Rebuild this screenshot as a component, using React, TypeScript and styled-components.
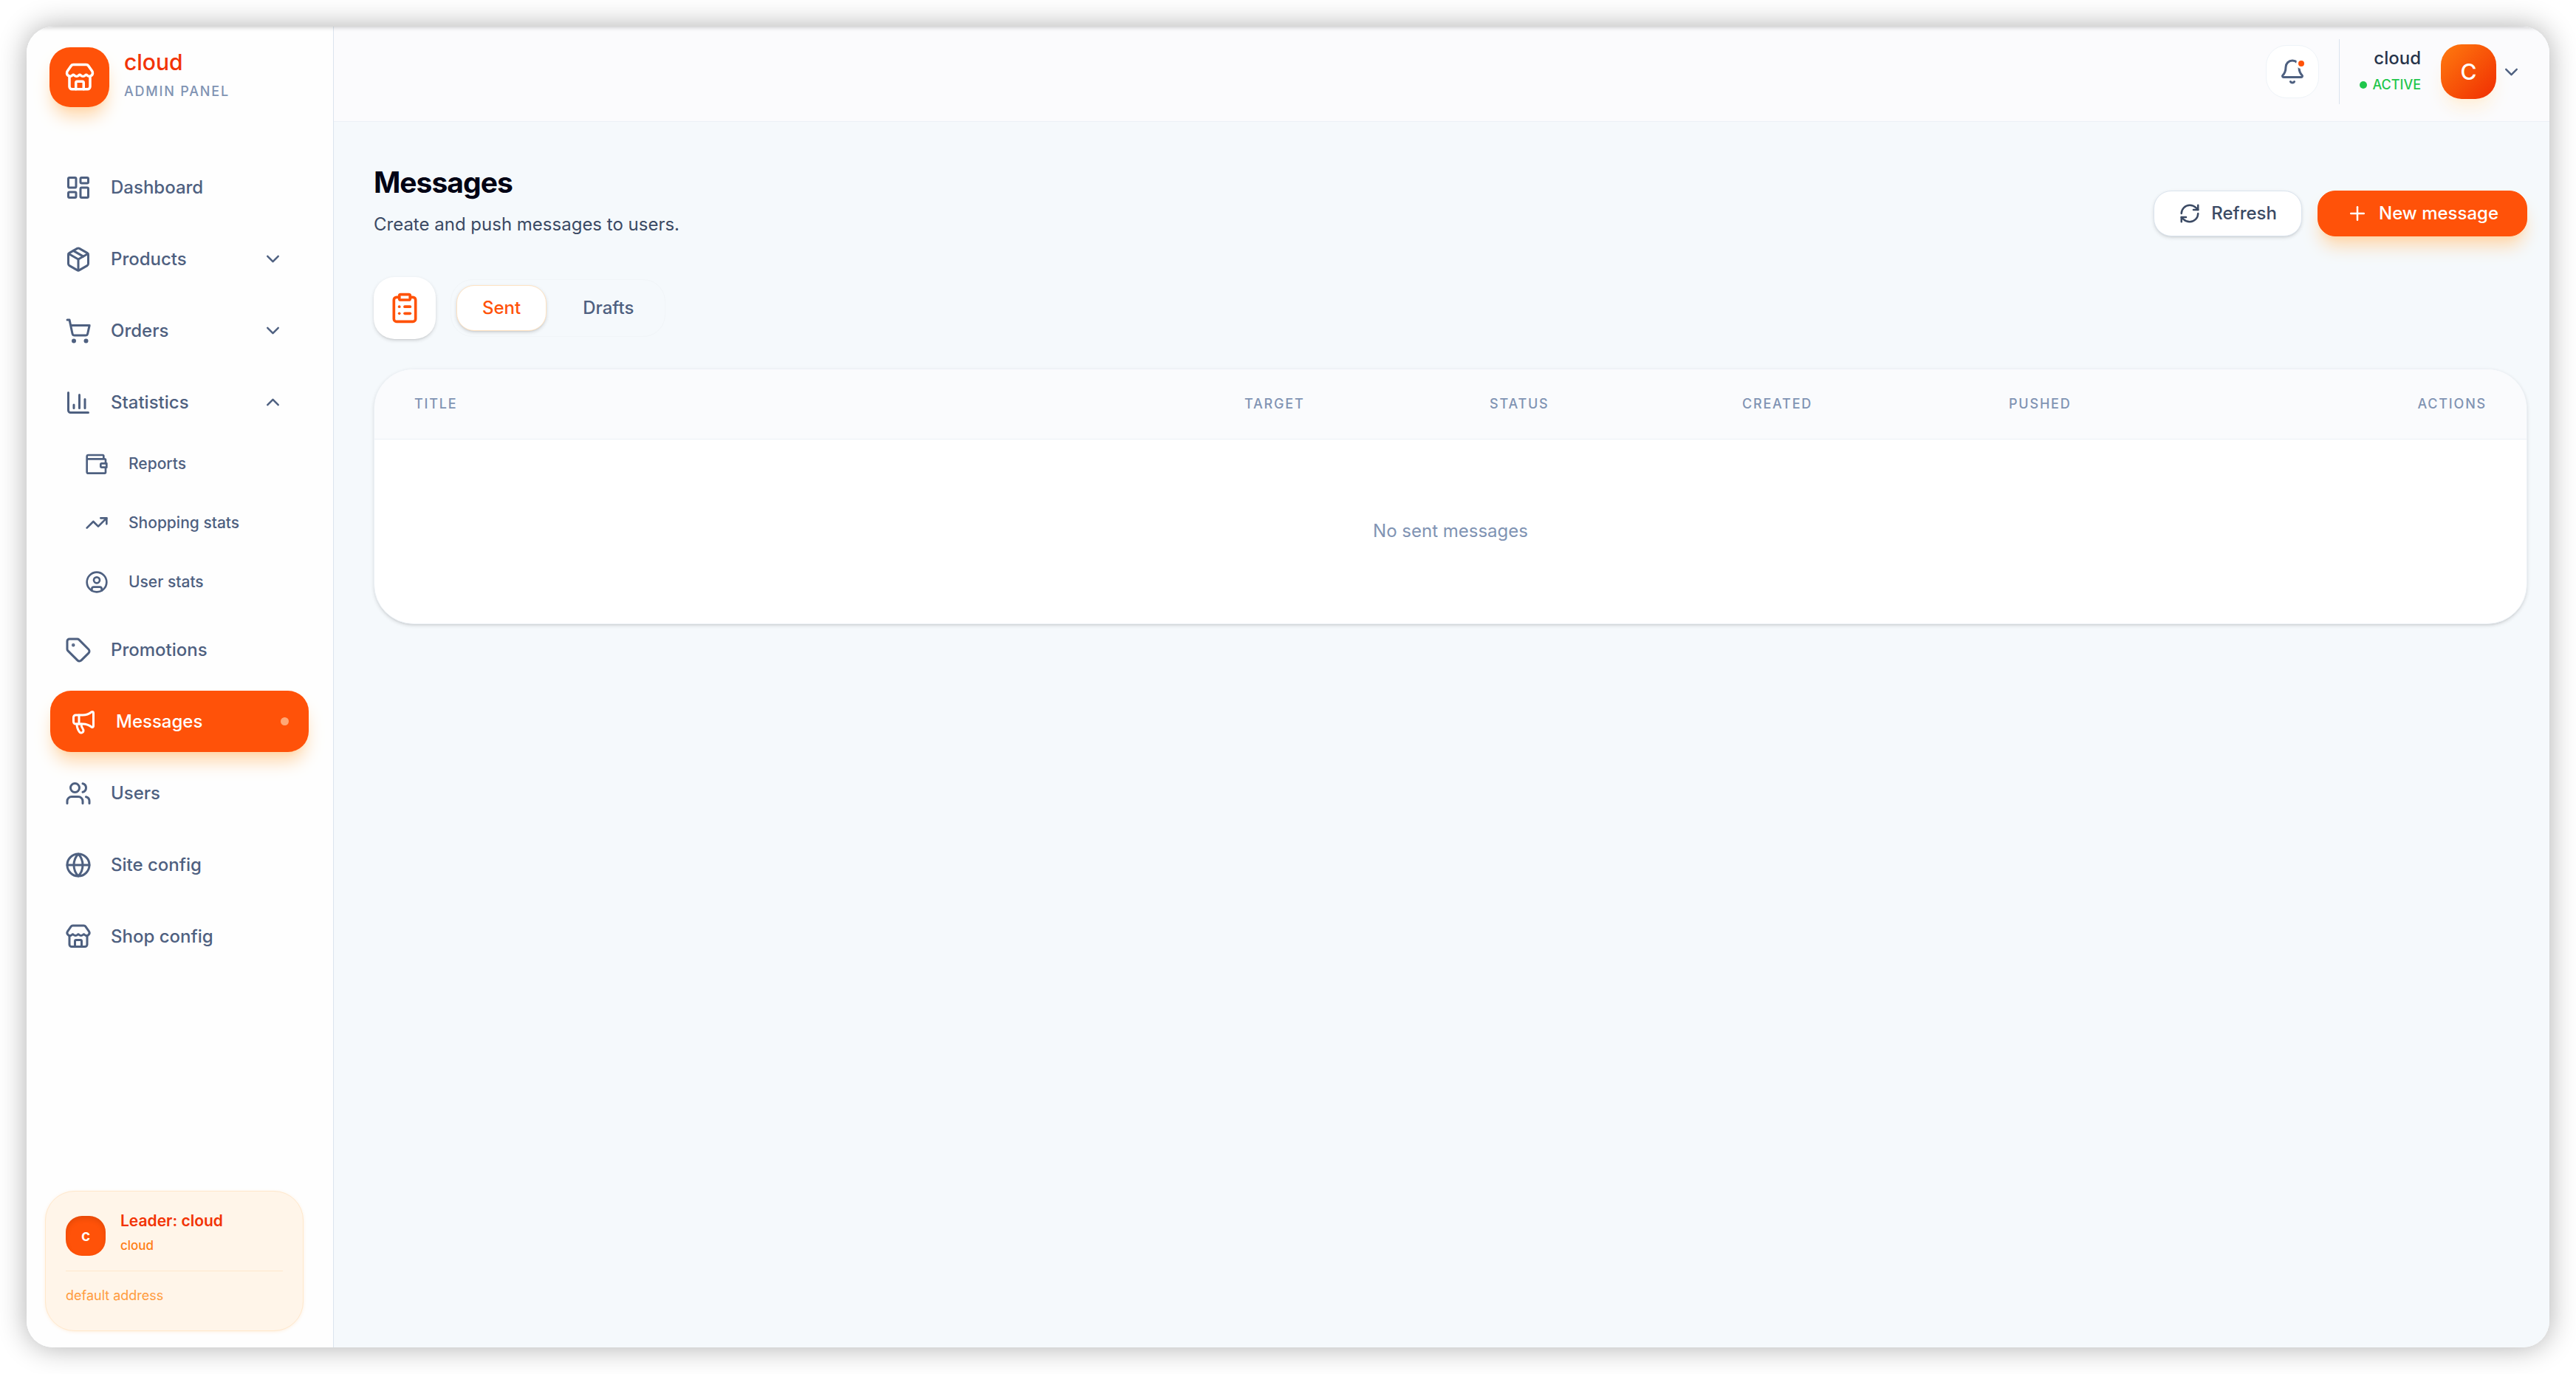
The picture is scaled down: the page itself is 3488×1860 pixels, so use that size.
import React from 'react';
import styled, { createGlobalStyle, css } from 'styled-components';
import {
  Bell,
  ChevronDown,
  ChevronUp,
  CircleUser,
  ClipboardList,
  Globe,
  LayoutDashboard,
  Megaphone,
  Package,
  Plus,
  RefreshCw,
  ShoppingCart,
  Store,
  Tag,
  TrendingUp,
  Users,
} from 'lucide-react';

const color = {
  accent: '#ff5209',
  accentDeep: '#f23305',
  accentMid: '#ff7d14',
  accentSoft: '#ff9b3d',
  ink: '#020314',
  strong: '#27344b',
  body: '#3b4a64',
  nav: '#4e6080',
  muted: '#8093b3',
  line: '#dbe4ee',
  lineSoft: '#ecf1f6',
  page: '#f5f9fc',
  bar: '#fbfbfd',
};

const GlobalStyle = createGlobalStyle`
  *, *::before, *::after { box-sizing: border-box; }
  body {
    margin: 0;
    background: #fff;
    color: ${color.nav};
    font-family: Inter, "Liberation Sans", sans-serif;
    font-size: 24px;
    line-height: 36px;
    -webkit-font-smoothing: antialiased;
  }
  button { font: inherit; color: inherit; cursor: pointer; }
  a { color: inherit; text-decoration: none; }
  h1, p, ul { margin: 0; padding: 0; }
  ul { list-style: none; }
  svg { display: block; flex: none; }
`;

const Desktop = styled.div`
  display: flex;
  min-height: 100vh;
  padding: 36px;
`;

const Window = styled.div`
  position: relative;
  display: flex;
  flex: 1;
  min-width: 0;
  overflow: hidden;
  border-radius: 36px;
  background: ${color.page};

  &::after {
    content: '';
    position: absolute;
    inset: 0;
    pointer-events: none;
    box-shadow: inset 0 2px 5px rgba(0, 0, 0, 0.16);
    clip-path: inset(0 0 calc(100% - 8px) 0);
  }
`;

const Shadow = styled.div`
  display: flex;
  flex: 1;
  min-width: 0;
  border-radius: 36px;
  box-shadow: 0 0 38px rgba(0, 0, 0, 0.32);
`;

const Sidebar = styled.aside`
  display: flex;
  flex: none;
  flex-direction: column;
  width: 416px;
  padding: 28px 40px 22px 25px;
  border-right: 1px solid ${color.line};
  background: #fefefe;
`;

const Brand = styled.div`
  display: flex;
  align-items: center;
  gap: 20px;
  padding-left: 6px;
`;

const BrandMark = styled.div`
  display: grid;
  place-items: center;
  width: 81px;
  height: 81px;
  border-radius: 28px;
  background: ${color.accent};
  color: #fff;
  box-shadow: 0 17px 25px -5px #ffd6a8, 0 7px 10px -7px #ffd6a8;
`;

const BrandText = styled.div`
  display: grid;
  gap: 8px;
  padding-bottom: 6px;
`;

const BrandName = styled.p`
  color: ${color.accentDeep};
  font-size: 30px;
  font-weight: 500;
  line-height: 36px;
`;

const BrandNote = styled.p`
  color: ${color.muted};
  font-size: 18px;
  font-weight: 500;
  line-height: 28px;
  letter-spacing: 0.1em;
`;

const Nav = styled.nav`
  flex: 1;
  margin-top: 67px;
`;

const NavList = styled.ul`
  display: grid;
  gap: 14px;
`;

const SubList = styled.ul`
  display: grid;
  gap: 8px;
  padding: 6px 0 0 27px;
`;

const navRow = css`
  display: flex;
  align-items: center;
  width: 100%;
  border: 0;
  background: none;
  text-align: left;
  font-weight: 500;
`;

const row = css<{ $active?: boolean }>`
  ${navRow}
  gap: 26px;
  height: 83px;
  padding: 0 27px;
  border-radius: 28px;
  ${(p) =>
    p.$active &&
    css`
      transform: translateX(7px);
      background: ${color.accent};
      color: #fff;
      box-shadow: 0 17px 25px -5px #ffd6a8, 0 7px 10px -7px #ffd6a8;
    `}
`;

const NavLink = styled.a<{ $active?: boolean }>`
  ${row}
`;

const NavToggle = styled.button<{ $active?: boolean }>`
  ${row}
`;

const SubLink = styled.a`
  ${navRow}
  gap: 27px;
  height: 72px;
  padding: 0 27px;
  font-size: 21px;
`;

const NavLabel = styled.span`
  flex: 1;
`;

const ActiveDot = styled.span`
  width: 11px;
  height: 11px;
  border-radius: 50%;
  background: #ffa876;
`;

const LeaderCard = styled.section`
  padding: 27px;
  border: 1px solid #ffe8cc;
  border-radius: 40px;
  background: #fff5e9;
  box-shadow: 0 1px 4px rgba(255, 160, 60, 0.16);
`;

const LeaderTop = styled.div`
  display: flex;
  align-items: center;
  gap: 20px;
  padding-bottom: 14px;
  border-bottom: 1px solid #ffe8cc;
`;

const LeaderAvatar = styled.div`
  display: grid;
  place-items: center;
  width: 54px;
  height: 54px;
  border-radius: 22px;
  background: ${color.accent};
  color: #fff;
  font-size: 21px;
  font-weight: 600;
  box-shadow: inset 0 4px 7px rgba(0, 0, 0, 0.1);
`;

const LeaderName = styled.p`
  color: ${color.accentDeep};
  font-size: 21px;
  font-weight: 600;
  line-height: 26px;
`;

const LeaderTeam = styled.p`
  padding: 6px 0;
  color: ${color.accentMid};
  font-size: 17px;
  font-weight: 500;
  line-height: 28px;
`;

const LeaderAddress = styled.p`
  padding: 19px 0 6px;
  color: ${color.accentSoft};
  font-size: 18px;
  line-height: 28px;
`;

const Main = styled.div`
  display: flex;
  flex: 1;
  flex-direction: column;
  min-width: 0;
`;

const Topbar = styled.header`
  display: flex;
  align-items: center;
  justify-content: flex-end;
  gap: 27px;
  height: 129px;
  padding: 0 37px 6px 54px;
  border-bottom: 1px solid ${color.lineSoft};
  background: ${color.bar};
`;

const BellButton = styled.button`
  position: relative;
  display: grid;
  place-items: center;
  width: 72px;
  height: 72px;
  padding: 0;
  border: 1px solid #eef3f8;
  border-radius: 28px;
  background: #fff;
`;

const BellBadge = styled.span`
  position: absolute;
  top: 17px;
  right: 16px;
  width: 14px;
  height: 14px;
  border: 3px solid #fff;
  border-radius: 50%;
  background: ${color.accent};
`;

const Divider = styled.span`
  width: 1px;
  height: 88px;
  background: ${color.line};
`;

const Account = styled.button`
  display: flex;
  align-items: center;
  padding: 0;
  border: 0;
  background: none;
`;

const AccountText = styled.span`
  display: grid;
  justify-items: end;
  gap: 7px;
  margin-right: 27px;
  padding-bottom: 2px;
`;

const AccountName = styled.span`
  color: ${color.strong};
  font-weight: 500;
  line-height: 30px;
`;

const AccountState = styled.span`
  display: flex;
  align-items: center;
  gap: 7px;
  color: #1fc64c;
  font-size: 18px;
  font-weight: 500;
  line-height: 28px;

  &::before {
    content: '';
    width: 10px;
    height: 10px;
    border-radius: 50%;
    background: currentColor;
  }
`;

const AccountAvatar = styled.span`
  display: grid;
  place-items: center;
  width: 75px;
  height: 74px;
  margin-right: 6px;
  border-radius: 28px;
  background: linear-gradient(135deg, #ff7b0f, #f02d02);
  color: #fff;
  font-size: 30px;
  font-weight: 500;
  box-shadow: 0 17px 25px -5px #fff0da, 0 7px 10px -7px #ffe9cc;
`;

const Page = styled.main`
  padding: 54px 30px 54px 54px;
`;

const PageHead = styled.div`
  display: flex;
  align-items: flex-end;
  justify-content: space-between;
`;

const Title = styled.h1`
  color: ${color.ink};
  font-size: 39px;
  font-weight: 700;
  line-height: 56px;
  letter-spacing: -0.025em;
`;

const Subtitle = styled.p`
  padding-top: 11px;
  color: ${color.body};
`;

const HeadActions = styled.div`
  display: flex;
  gap: 21px;
  padding-bottom: 2px;
`;

const HeadButton = styled.button<{ $primary?: boolean }>`
  display: flex;
  align-items: center;
  gap: 14px;
  height: 62px;
  padding: 0 33px;
  border: 1px solid ${color.line};
  border-radius: 24px;
  background: #fff;
  color: ${color.body};
  font-weight: 500;
  box-shadow: 0 2px 5px rgba(0, 0, 0, 0.12), 0 2px 3px -2px rgba(0, 0, 0, 0.12);
  ${(p) =>
    p.$primary &&
    css`
      padding: 0 38px;
      border-color: ${color.accent};
      background: ${color.accent};
      color: #fff;
      box-shadow: 0 17px 25px -5px #ffd6a8, 0 7px 10px -7px #ffd6a8;
    `}
`;

const TabRow = styled.div`
  display: flex;
  align-items: center;
  gap: 20px;
  margin-top: 53px;
`;

const TabIcon = styled.div`
  display: grid;
  place-items: center;
  width: 84px;
  height: 84px;
  border-radius: 28px;
  background: #fff;
  color: ${color.accent};
  box-shadow: 0 2px 5px rgba(0, 0, 0, 0.14), 0 2px 3px -2px rgba(0, 0, 0, 0.14);
`;

const Tabs = styled.div`
  display: flex;
  gap: 14px;
  padding: 7px;
  border: 1px solid #f1f5f8;
  border-radius: 30px;
`;

const Tab = styled.button<{ $active?: boolean }>`
  height: 62px;
  padding: 0 34px;
  border: 1px solid transparent;
  border-radius: 24px;
  background: none;
  font-weight: 500;
  ${(p) =>
    p.$active &&
    css`
      border-color: #ffe3c2;
      background: #fff;
      color: ${color.accent};
      box-shadow: 0 2px 5px rgba(0, 0, 0, 0.14), 0 2px 3px -2px rgba(0, 0, 0, 0.14);
    `}
`;

const TableCard = styled.section`
  margin-top: 40px;
  overflow: hidden;
  border: 1px solid ${color.lineSoft};
  border-radius: 54px;
  background: #fff;
  box-shadow: 0 2px 5px rgba(0, 0, 0, 0.12), 0 2px 3px -2px rgba(0, 0, 0, 0.14);
`;

const Table = styled.table`
  width: 100%;
  border-collapse: collapse;
  table-layout: fixed;
`;

const HeadCell = styled.th<{ $width?: number; $end?: boolean }>`
  width: ${(p) => (p.$width ? `${p.$width}px` : 'auto')};
  height: 94px;
  padding: 0 54px;
  border-bottom: 1px solid ${color.lineSoft};
  background: #fafbfd;
  color: ${color.muted};
  font-size: 18px;
  font-weight: 500;
  letter-spacing: 0.1em;
  text-align: ${(p) => (p.$end ? 'right' : 'left')};
`;

const EmptyCell = styled.td`
  height: 250px;
  padding: 0 54px;
  color: ${color.muted};
  text-align: center;
`;

type IconProps = { size: number };

const OutlineIcon = ({ size, children }: IconProps & { children: React.ReactNode }) => (
  <svg
    width={size}
    height={size}
    viewBox="0 0 24 24"
    fill="none"
    stroke="currentColor"
    strokeWidth="2"
    strokeLinecap="round"
    strokeLinejoin="round"
  >
    {children}
  </svg>
);

const WalletIcon = ({ size }: IconProps) => (
  <OutlineIcon size={size}>
    <path d="M19 6.500V4a1 1 0 0 0-1-1H3.500a1.500 1.500 0 0 0-1.500 1.500V20a1.500 1.500 0 0 0 1.500 1.500H20a1 1 0 0 0 1-1V16" />
    <path d="M2.500 7H20a1 1 0 0 1 1 1v3.500" />
    <path d="M17 11.500h5v4h-5a1 1 0 0 1-1-1v-2a1 1 0 0 1 1-1z" />
  </OutlineIcon>
);

const StatsIcon = ({ size }: IconProps) => (
  <OutlineIcon size={size}>
    <path d="M3 3v16a2 2 0 0 0 2 2h16" />
    <path d="M18 17V9" />
    <path d="M13 17V5" />
    <path d="M8 17v-3" />
  </OutlineIcon>
);

type Item = {
  label: string;
  icon: React.ElementType;
  active?: boolean;
  open?: boolean;
  group?: boolean;
  children?: { label: string; icon: React.ElementType }[];
};

const items: Item[] = [
  { label: 'Dashboard', icon: LayoutDashboard },
  { label: 'Products', icon: Package, group: true },
  { label: 'Orders', icon: ShoppingCart, group: true },
  {
    label: 'Statistics',
    icon: StatsIcon,
    group: true,
    open: true,
    children: [
      { label: 'Reports', icon: WalletIcon },
      { label: 'Shopping stats', icon: TrendingUp },
      { label: 'User stats', icon: CircleUser },
    ],
  },
  { label: 'Promotions', icon: Tag },
  { label: 'Messages', icon: Megaphone, active: true },
  { label: 'Users', icon: Users },
  { label: 'Site config', icon: Globe },
  { label: 'Shop config', icon: Store },
];

const NavEntry = ({ item }: { item: Item }) => {
  const Icon = item.icon;
  if (!item.group) {
    return (
      <li>
        <NavLink href="#" $active={item.active} aria-current={item.active ? 'page' : undefined}>
          <Icon size={36} />
          <NavLabel>{item.label}</NavLabel>
          {item.active && <ActiveDot />}
        </NavLink>
      </li>
    );
  }
  return (
    <li>
      <NavToggle type="button" aria-expanded={!!item.open}>
        <Icon size={36} />
        <NavLabel>{item.label}</NavLabel>
        {item.open ? <ChevronUp size={29} /> : <ChevronDown size={29} />}
      </NavToggle>
      {item.children && (
        <SubList>
          {item.children.map((child) => (
            <li key={child.label}>
              <SubLink href="#">
                <child.icon size={32} />
                {child.label}
              </SubLink>
            </li>
          ))}
        </SubList>
      )}
    </li>
  );
};

export default function App() {
  return (
    <>
      <GlobalStyle />
      <Desktop>
        <Shadow>
          <Window>
            <Sidebar>
              <Brand>
                <BrandMark>
                  <Store size={42} />
                </BrandMark>
                <BrandText>
                  <BrandName>cloud</BrandName>
                  <BrandNote>ADMIN PANEL</BrandNote>
                </BrandText>
              </Brand>
              <Nav>
                <NavList>
                  {items.map((item) => (
                    <NavEntry key={item.label} item={item} />
                  ))}
                </NavList>
              </Nav>
              <LeaderCard>
                <LeaderTop>
                  <LeaderAvatar>c</LeaderAvatar>
                  <div>
                    <LeaderName>Leader: cloud</LeaderName>
                    <LeaderTeam>cloud</LeaderTeam>
                  </div>
                </LeaderTop>
                <LeaderAddress>default address</LeaderAddress>
              </LeaderCard>
            </Sidebar>
            <Main>
              <Topbar>
                <BellButton type="button" aria-label="Notifications">
                  <Bell size={36} />
                  <BellBadge />
                </BellButton>
                <Divider />
                <Account type="button">
                  <AccountText>
                    <AccountName>cloud</AccountName>
                    <AccountState>ACTIVE</AccountState>
                  </AccountText>
                  <AccountAvatar>C</AccountAvatar>
                  <ChevronDown size={29} />
                </Account>
              </Topbar>
              <Page>
                <PageHead>
                  <div>
                    <Title>Messages</Title>
                    <Subtitle>Create and push messages to users.</Subtitle>
                  </div>
                  <HeadActions>
                    <HeadButton type="button">
                      <RefreshCw size={30} />
                      Refresh
                    </HeadButton>
                    <HeadButton type="button" $primary>
                      <Plus size={30} />
                      New message
                    </HeadButton>
                  </HeadActions>
                </PageHead>
                <TabRow>
                  <TabIcon>
                    <ClipboardList size={44} />
                  </TabIcon>
                  <Tabs role="tablist">
                    <Tab type="button" role="tab" aria-selected $active>
                      Sent
                    </Tab>
                    <Tab type="button" role="tab" aria-selected={false}>
                      Drafts
                    </Tab>
                  </Tabs>
                </TabRow>
                <TableCard>
                  <Table>
                    <thead>
                      <tr>
                        <HeadCell>TITLE</HeadCell>
                        <HeadCell $width={332}>TARGET</HeadCell>
                        <HeadCell $width={342}>STATUS</HeadCell>
                        <HeadCell $width={361}>CREATED</HeadCell>
                        <HeadCell $width={360}>PUSHED</HeadCell>
                        <HeadCell $width={395} $end>
                          ACTIONS
                        </HeadCell>
                      </tr>
                    </thead>
                    <tbody>
                      <tr>
                        <EmptyCell colSpan={6}>No sent messages</EmptyCell>
                      </tr>
                    </tbody>
                  </Table>
                </TableCard>
              </Page>
            </Main>
          </Window>
        </Shadow>
      </Desktop>
    </>
  );
}
